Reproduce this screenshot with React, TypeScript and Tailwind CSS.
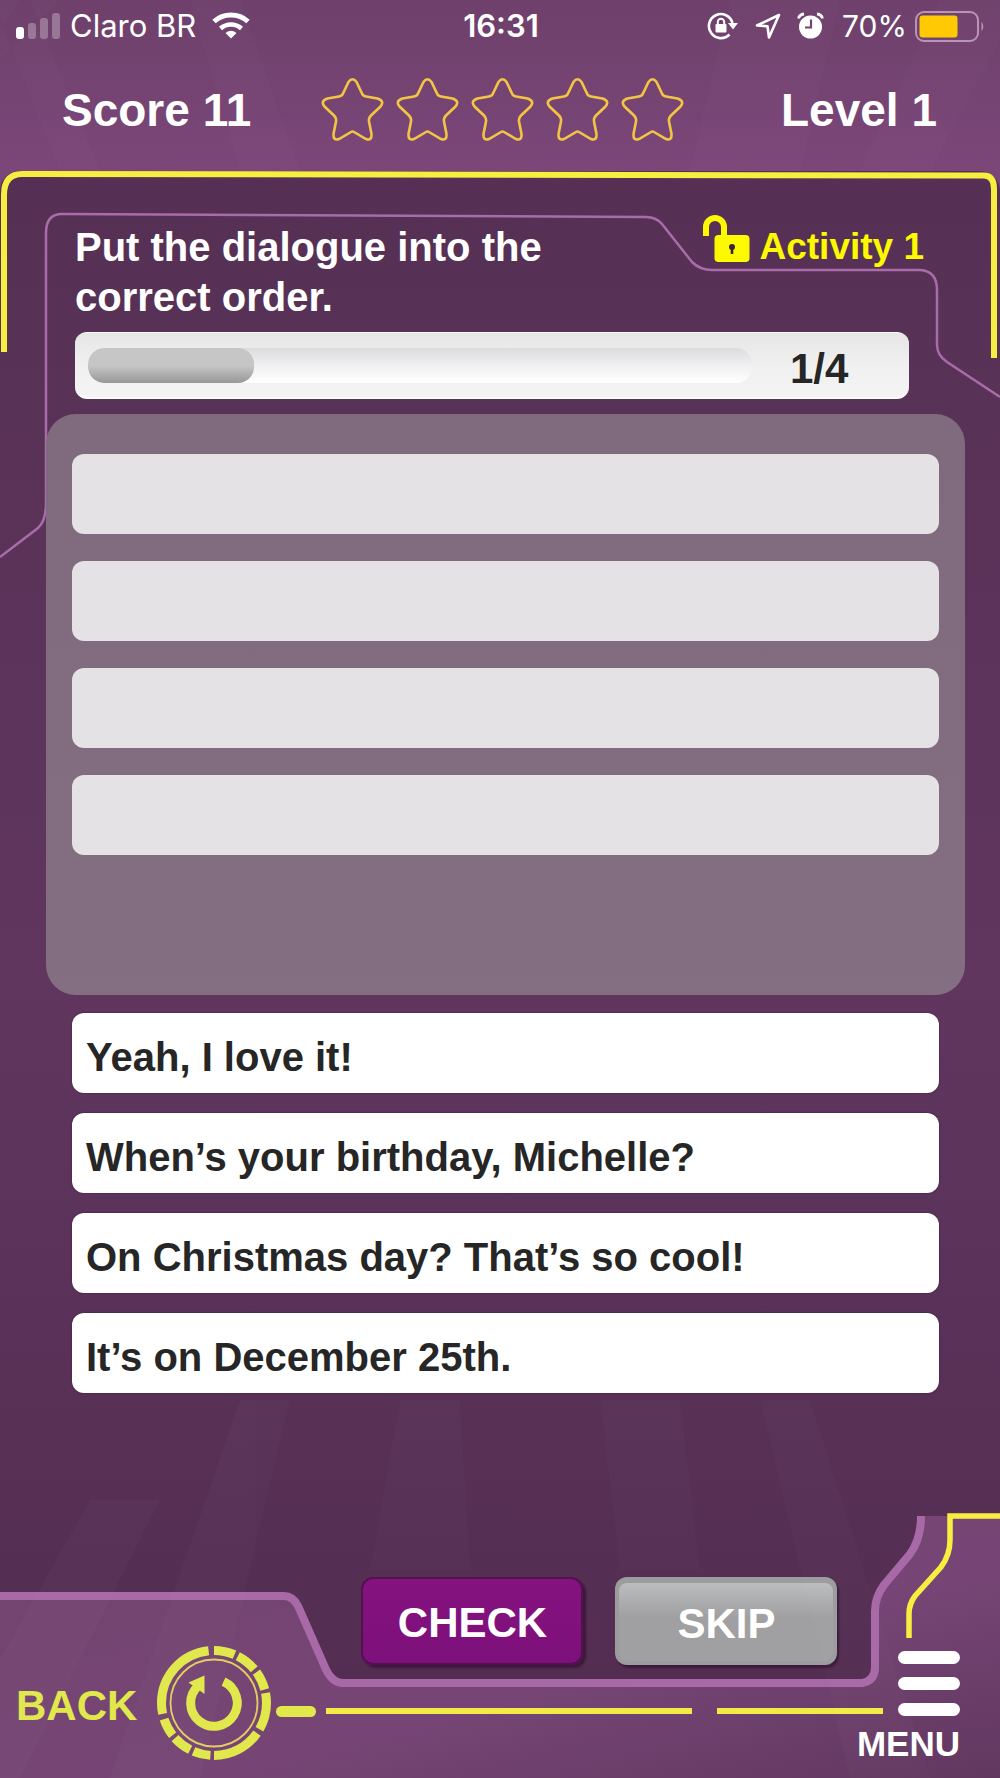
import { useState } from 'react';

const sentences = [
  'Yeah, I love it!',
  'When’s your birthday, Michelle?',
  'On Christmas day? That’s so cool!',
  'It’s on December 25th.',
];

const STEP = 1;
const TOTAL = 4;

function StatusBar() {
  return (
    <div className="flex h-[52px] items-center pl-4 pr-[14px] font-['Inter',sans-serif] text-[31px] font-normal leading-[52px] text-white">
      <div className="flex flex-1 items-center">
        <svg className="h-[28px] w-[46px]" viewBox="0 0 46 28" fill="white" aria-label="Signal">
          <rect x="0" y="15" width="8" height="12" rx="3" />
          <g opacity="0.28">
            <rect x="12" y="11" width="8" height="16" rx="3" />
            <rect x="24" y="6" width="8" height="21" rx="3" />
            <rect x="36" y="1" width="8" height="26" rx="3" />
          </g>
        </svg>
        <span className="ml-2">Claro BR</span>
        <svg className="ml-4 h-[28px] w-[38px]" viewBox="0 0 38 28" fill="none" stroke="white" strokeWidth="5" aria-label="Wi-Fi">
          <path d="M2 9.5C11.5.9 26.500.9 36 9.500" />
          <path d="M8.500 16.500C14.500 11.200 23.500 11.200 29.500 16.500" strokeWidth="4.500" />
          <path d="M19 26.500l-5.500-5.500q5.500-4.500 11 0z" fill="white" stroke="none" />
        </svg>
      </div>
      <span className="font-semibold">16:31</span>
      <div className="flex flex-1 items-center justify-end">
        {/* rotation lock */}
        <svg className="h-[28px] w-[31px]" viewBox="0 0 31 28" fill="none" stroke="white" strokeWidth="2.6">
          <path d="M25.500 11A12 12 0 1 0 22.500 22.500" />
          <path d="M21 11h10l-5 6.500z" fill="white" stroke="none" />
          <rect x="8.500" y="12" width="11" height="8.500" rx="1" fill="white" stroke="none" />
          <path d="M10.800 13v-3a3.200 3.200 0 0 1 6.400 0v3" strokeWidth="2" />
        </svg>
        <svg className="ml-[17px] h-[28px] w-[26px]" viewBox="0 0 26 28" fill="none" stroke="white" strokeWidth="2.6" strokeLinejoin="round">
          <path d="M24 3L2 13.500l10.500.8L14 25.500z" />
        </svg>
        <svg className="ml-4 h-[28px] w-[27px]" viewBox="0 0 27 28">
          <circle cx="13.500" cy="15" r="11.500" fill="white" />
          <path d="M1.500 6.500Q2.500 2.500 7 2M25.500 6.500Q24.500 2.500 20 2" fill="none" stroke="white" strokeWidth="2.800" />
          <path d="M14 7.500V15.500H8" fill="none" stroke="#70416d" strokeWidth="2.200" />
        </svg>
        <span className="ml-[18px] text-[30px]">70%</span>
        <svg className="ml-2 h-[31px] w-[71px]" viewBox="0 0 71 31" aria-label="Battery">
          <rect x="1" y="1" width="62" height="29" rx="8" fill="none" stroke="#b794b6" strokeWidth="2" />
          <rect x="4.500" y="4.500" width="38" height="22" rx="3" fill="#ffc900" />
          <path d="M66.500 10.500q3.500 5 0 10z" fill="#b794b6" />
        </svg>
      </div>
    </div>
  );
}

function Star() {
  return (
    <svg className="h-[63px] w-[61px] overflow-visible" viewBox="0 0 61 63" fill="none" stroke="#f3c544" strokeWidth="2.600">
      <path d="M26.500 4Q30.500-1.500 34.500 4L40 15.500Q41 18 44 18.500L55.500 20.500Q63 23 58.500 28.500L49 37.500Q46.500 40 47 43.500L49.500 56Q50 63 44 61L32 54Q30.500 53 29 54L17 61Q11 63 11.500 56L14 43.500Q14.500 40 12 37.500L2.500 28.500Q-2 23 5.500 20.500L17 18.500Q20 18 21 15.500Z" />
    </svg>
  );
}

function Header() {
  return (
    <header className="flex h-[119px] items-center pb-1 pr-[63px] text-[46px] leading-[46px] text-white">
      <p className="w-[322px] pl-[62px]">Score 11</p>
      <div className="flex gap-[14px]" role="img" aria-label="0 of 5 stars">
        {[1, 2, 3, 4, 5].map((n) => (
          <Star key={n} />
        ))}
      </div>
      <p className="ml-auto">Level 1</p>
    </header>
  );
}

function Frame() {
  return (
    <svg
      className="pointer-events-none absolute left-0 top-0 h-[400px] w-full"
      viewBox="0 0 1000 400"
      preserveAspectRatio="none"
      fill="none"
    >
      <path d="M4 181V24Q4 3 22 3L984 4.500Q994 4.500 994 18V187" stroke="#f7ef40" strokeWidth="6" />
      <path
        d="M0 386L38 357Q46 350 46 332V62Q46 43 62 43L646 46Q656 46 662 53L692 91Q700 99 712 99H920Q937 100 937 119V174Q937 184 947 191L1000 226"
        stroke="#a86ca8"
        strokeWidth="2.500"
      />
    </svg>
  );
}

function Rays() {
  return (
    <svg className="pointer-events-none absolute inset-0 h-full w-full" viewBox="0 0 1000 1778" preserveAspectRatio="none" fill="white">
      <g opacity="0.014">
        <path d="M0 60L60 0H20L0 30zM30 0L100 171H60L0 20V0zM190 0L240 171H300L240 0zM730 0L690 171H800L840 0zM940 0L860 171H930L1000 40V0z" />
        <path d="M240 1400L110 1778H200L290 1400zM400 1400L370 1570H470L460 1400zM600 1400L620 1570H700L680 1400zM760 1400L850 1778H930L810 1400z" />
        <path d="M90 1500L0 1660V1778H20L160 1500z" />
      </g>
    </svg>
  );
}

function LockIcon() {
  return (
    <svg className="h-[48px] w-[49px]" viewBox="0 0 49 48">
      <path d="M4 22V13a9 9 0 0 1 18 0v10" fill="none" stroke="#fdf900" strokeWidth="6" />
      <rect x="12.500" y="21" width="35" height="27" rx="4" fill="#fdf900" />
      <circle cx="30" cy="33" r="3" fill="#3c2338" />
      <path d="M30 33v7" stroke="#3c2338" strokeWidth="2.600" />
    </svg>
  );
}

function Progress() {
  return (
    <div className="ml-[75px] mr-[91px] mt-[10px] flex h-[67px] items-center rounded-xl border-b-2 border-t border-white bg-gradient-to-b from-[#e6e6e7] via-[#f0f0f0] to-[#f4f4f4] pl-[13px]">
      <div
        className="h-[35px] flex-1 overflow-hidden rounded-2xl bg-gradient-to-b from-[#dcdcde] via-[#f0f0f2] to-white"
        role="progressbar"
        aria-label="Dialogue progress"
        aria-valuemin={0}
        aria-valuemax={TOTAL}
        aria-valuenow={STEP}
      >
        <div
          className="h-full rounded-2xl bg-gradient-to-b from-[#c6c6c6] from-50% to-[#989898]"
          style={{ width: `${(STEP / TOTAL) * 100}%` }}
        />
      </div>
      <span className="w-[157px] pl-[38px] pt-2 text-[42px] leading-[50px] text-[#262626]">
        {STEP}/{TOTAL}
      </span>
    </div>
  );
}

function BackIcon() {
  return (
    <svg className="h-[114px] w-[114px]" viewBox="0 0 114 114" fill="none" stroke="#e1e84b">
      <circle
        cx="57"
        cy="57"
        r="52.500"
        strokeWidth="9"
        pathLength="360"
        strokeDasharray="23 4 23 4 21 4 41 5 55 4 19 4 21 4 20 6 96 6"
        transform="rotate(-90 57 57)"
      />
      <circle cx="57" cy="57" r="43.500" stroke="#e3cd62" strokeWidth="1.800" />
      <path d="M66.500 35.700A23.300 23.300 0 1 1 41 40" strokeWidth="9" />
      <path d="M31.500 36.500L47.500 29.500V48z" fill="#e1e84b" stroke="none" />
    </svg>
  );
}

function Footer() {
  return (
    <footer className="relative mt-auto flex h-[265px] items-end">
      <svg
        className="pointer-events-none absolute inset-0 h-full w-full"
        viewBox="0 0 1000 265"
        preserveAspectRatio="none"
        fill="none"
      >
        <defs>
          <linearGradient id="base" x1="0" y1="0" x2="1" y2="1">
            <stop offset="0" stopColor="#74446f" />
            <stop offset="0.600" stopColor="#764575" />
            <stop offset="1" stopColor="#61375f" />
          </linearGradient>
        </defs>
        <path
          d="M0 83H284Q293 83 298 93L324 152Q331 170 343 170H862Q875 168 875 154V98Q875 84 884 72L910 41Q921 26 921 3H1000V265H0z"
          fill="url(#base)"
        />
        <path
          d="M0 83H284Q293 83 298 93L324 152Q331 170 343 170H862Q875 168 875 154V98Q875 84 884 72L910 41Q921 26 921 3"
          stroke="#a869a7"
          strokeWidth="8"
        />
        <path d="M1000 3H950V27Q950 42 941 54L915 83Q909 91 909 101V125" stroke="#f7ef40" strokeWidth="5.500" />
      </svg>

      <button className="relative flex w-[276px] shrink-0 items-center gap-5 pb-[18px] pl-4 text-[42px] leading-[42px] text-[#e1e84b]">
        <span className="pt-[6px]">BACK</span>
        <BackIcon />
      </button>

      <div className="relative flex-1 pb-[61px]">
        <div className="flex justify-center gap-8 pl-10">
          <button className="h-[88px] w-[222px] rounded-xl border-2 border-[#54104f] bg-gradient-to-b from-[#85127f] to-[#7d107a] pt-1 text-[42px] leading-[42px] text-white shadow-[3px_3px_2px_#3c1a3a]">
            CHECK
          </button>
          <button className="h-[88px] w-[222px] rounded-xl bg-[#9c9b9d] p-1 pt-[6px] text-[42px] leading-[42px] text-white shadow-[2px_3px_2px_#3c1a3a]">
            <span className="flex h-full items-center justify-center rounded-lg bg-gradient-to-b from-[#babdbf] to-[#a09fa1] to-45% pt-1">
              SKIP
            </span>
          </button>
        </div>
        <div className="mt-10 flex h-3 items-center">
          <span className="h-[11px] w-10 rounded-full bg-[#e1e84b]" />
          <span className="ml-[10px] h-[6px] flex-[366] bg-[#f3eb45]" />
          <span className="ml-[25px] h-[6px] flex-[166] bg-[#f3eb45]" />
        </div>
      </div>

      <button className="relative -ml-[26px] mr-10 flex shrink-0 flex-col items-end pb-[17px] text-white">
        <span className="flex w-[62px] flex-col gap-[13px]">
          <span className="h-[13px] rounded-full bg-white" />
          <span className="h-[13px] rounded-full bg-white" />
          <span className="h-[13px] rounded-full bg-white" />
        </span>
        <span className="mt-[10px] text-[35px] leading-[35px]">MENU</span>
      </button>
    </footer>
  );
}

export default function App() {
  const [selected, setSelected] = useState<number | null>(null);

  return (
    <div className="relative flex min-h-screen flex-col bg-gradient-to-b from-[#6e406b] to-[#7b4779] to-[171px] font-['Liberation_Sans',Arial,sans-serif] font-bold">
      <StatusBar />
      <Header />

      <main className="relative flex flex-1 flex-col rounded-t-[20px] bg-gradient-to-b from-[#563054] via-[#60365f] to-[#522c50] pt-[51px]">
        <Frame />

        <div className="relative flex items-start justify-between pl-[75px] pr-[76px]">
          <h1 className="w-[490px] text-[40px] leading-[50px] text-white">Put the dialogue into the correct order.</h1>
          <div className="flex items-start text-[37px] leading-[50px] text-[#fdf900]">
            <span className="-mt-2 mr-2">
              <LockIcon />
            </span>
            Activity 1
          </div>
        </div>

        <Progress />

        <ol className="relative ml-[46px] mr-[35px] mt-[15px] flex flex-col gap-[27px] rounded-[30px] bg-gradient-to-b from-[#7f6b7d] to-[#846e82] px-[26px] pb-[140px] pt-10">
          {sentences.map((s, i) => (
            <li key={s} aria-label={`Slot ${i + 1}`} className="h-20 rounded-xl bg-[#e4e2e5]" />
          ))}
        </ol>

        <div className="relative ml-[72px] mr-[61px] mt-[18px] mb-8 flex flex-col gap-5">
          {sentences.map((s, i) => (
            <button
              key={s}
              onClick={() => setSelected(i)}
              aria-pressed={selected === i}
              className="h-20 rounded-xl bg-white pl-[14px] pt-2 text-left text-[40px] leading-[50px] text-[#262626] shadow-[0_0_2px_#3c1a3a]"
            >
              {s}
            </button>
          ))}
        </div>

        <Footer />
      </main>
      <Rays />
    </div>
  );
}
